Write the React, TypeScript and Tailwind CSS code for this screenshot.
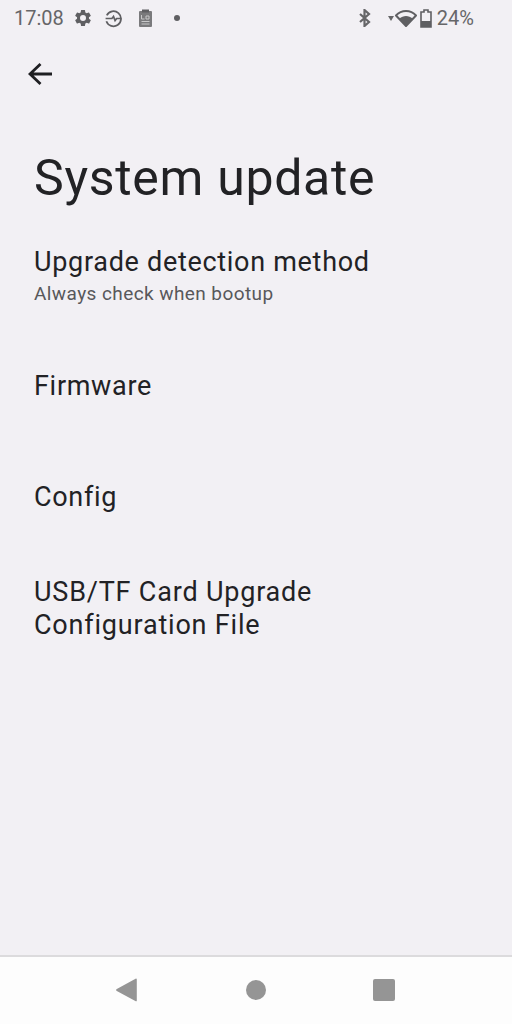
const font = "font-['Roboto',sans-serif]";

function Row({ children, className }: { children: React.ReactNode; className: string }) {
  return <div className={`px-[34px] text-[#222225] ${className}`}>{children}</div>;
}

export default function App() {
  return (
    <div className={`w-[512px] h-[1024px] flex flex-col bg-[#f2f0f4] overflow-hidden ${font}`}>
      <div className="h-[36px] flex items-center pl-[14px] pr-[38px] text-[#666668] text-[20px] justify-between">
        <div className="flex items-center">
          <span className="w-[50px]">17:08</span>
          <svg className="ml-[9px]" width="20" height="20" viewBox="0 0 24 24" fill="#5f5f62">
            <path d="M19.14 12.94c.04-.3.06-.61.06-.94s-.02-.64-.07-.94l2.03-1.58a.49.49 0 0 0 .12-.61l-1.92-3.32a.49.49 0 0 0-.59-.22l-2.39.96a7 7 0 0 0-1.62-.94l-.36-2.54a.48.48 0 0 0-.48-.41h-3.84a.47.47 0 0 0-.47.41l-.36 2.54c-.59.24-1.13.57-1.62.94l-2.39-.96a.49.49 0 0 0-.59.22L2.73 8.87a.48.48 0 0 0 .12.61l2.03 1.58c-.05.3-.08.63-.08.94s.02.64.07.94l-2.03 1.58a.49.49 0 0 0-.12.61l1.92 3.32c.12.22.37.29.59.22l2.39-.96c.5.38 1.03.7 1.62.94l.36 2.54c.05.24.24.41.48.41h3.84c.24 0 .44-.17.47-.41l.36-2.54c.59-.24 1.13-.56 1.62-.94l2.39.96c.22.08.47 0 .59-.22l1.92-3.32a.47.47 0 0 0-.12-.61zM12 15.6A3.6 3.6 0 1 1 12 8.4a3.6 3.6 0 0 1 0 7.2z" />
          </svg>
          <svg className="ml-[11px]" width="19" height="19" viewBox="0 0 24 24" fill="none" stroke="#5f5f62" strokeWidth="2.2">
            <path d="M3.500 8A9.500 9.500 0 1 1 3 15.500" />
            <path d="M2 12h8l2-2.500 2 5 2-2.500h6" strokeWidth="2.200" />
          </svg>
          <svg className="ml-[15px]" width="15" height="18" viewBox="0 0 15 18">
            <rect x="1" y="2" width="13" height="16" rx="1" fill="#7a7a7c" />
            <rect x="4" y="0.5" width="7" height="3" fill="#5f5f62" />
            <path d="M3.500 6v4h3M8 7h3v3H8zM3.500 12.500h8M3.500 15h8" stroke="#c8c8c9" strokeWidth="1" fill="none" />
          </svg>
          <span className="ml-[21px] w-[6px] h-[6px] rounded-full bg-[#5f5f62]" />
        </div>
        <div className="flex items-center">
          <svg width="14" height="18" viewBox="0 0 14 18" fill="none" stroke="#666668" strokeWidth="2.200">
            <path d="M2 5l9 8-4.500 4V1L11 5l-9 8" />
          </svg>
          <svg className="ml-[16px]" width="6" height="6" viewBox="0 0 6 6" fill="#666668"><path d="M0 1h6L3 6z" /></svg>
          <svg className="ml-[1px]" width="22" height="18" viewBox="0 0 22 18">
            <path d="M1 6.500C6.500 .5 15.500 .5 21 6.500L11 17z" fill="none" stroke="#5f5f62" strokeWidth="2" strokeLinejoin="round" />
            <path d="M4.500 9.500C8 6 14 6 17.500 9.500L11 17z" fill="#5f5f62" />
          </svg>
          <svg className="ml-[3px]" width="12" height="19" viewBox="0 0 12 19">
            <path d="M4 1h4v2h3v15H1V3h3z" fill="none" stroke="#5f5f62" strokeWidth="1.600" />
            <rect x="1" y="12" width="10" height="6" fill="#5f5f62" />
          </svg>
          <span className="ml-[5px]">24%</span>
        </div>
      </div>

      <div className="h-[76px] pl-[28px] pt-[26px]">
        <svg width="24" height="24" viewBox="0 0 24 24" fill="none" stroke="#1f1f22" strokeWidth="2.800">
          <path d="M24 12H2M12.500 2L2 12l10.500 10" />
        </svg>
      </div>

      <Row className="text-[50px] leading-[56px] mt-[38px] tracking-[0.7px]">System update</Row>

      <Row className="mt-[40px] text-[27px] leading-[33px] tracking-[0.7px]">Upgrade detection method</Row>
      <Row className="text-[19px] leading-[24px] !text-[#58585b] mt-[3px] tracking-[0.42px]">Always check when bootup</Row>

      <Row className="mt-[64px] text-[27px] leading-[33px] tracking-[0.7px]">Firmware</Row>
      <Row className="mt-[78px] text-[27px] leading-[33px] tracking-[0.7px]">Config</Row>
      <Row className="mt-[62px] text-[27px] leading-[33px] tracking-[0.8px]">USB/TF Card Upgrade<br />Configuration File</Row>

      <div className="flex-1" />
      <div className="h-[69px] border-t-2 border-[#dcdbdd] bg-[#fdfdfd] flex items-center">
        <div className="w-full pl-[116px] pb-[2px] flex items-center">
          <svg width="21" height="24" viewBox="0 0 21 24" fill="#959595"><path d="M20 .5c.5 0 .8.3.8 1v21c0 .8-.4 1-1 .800L.8 13c-1-.500-1-1.500 0-2z" /></svg>
          <span className="ml-[109px] w-[20px] h-[20px] rounded-full bg-[#959595]" />
          <span className="ml-[107px] w-[22px] h-[22px] rounded-[2px] bg-[#959595]" />
        </div>
      </div>
    </div>
  );
}
